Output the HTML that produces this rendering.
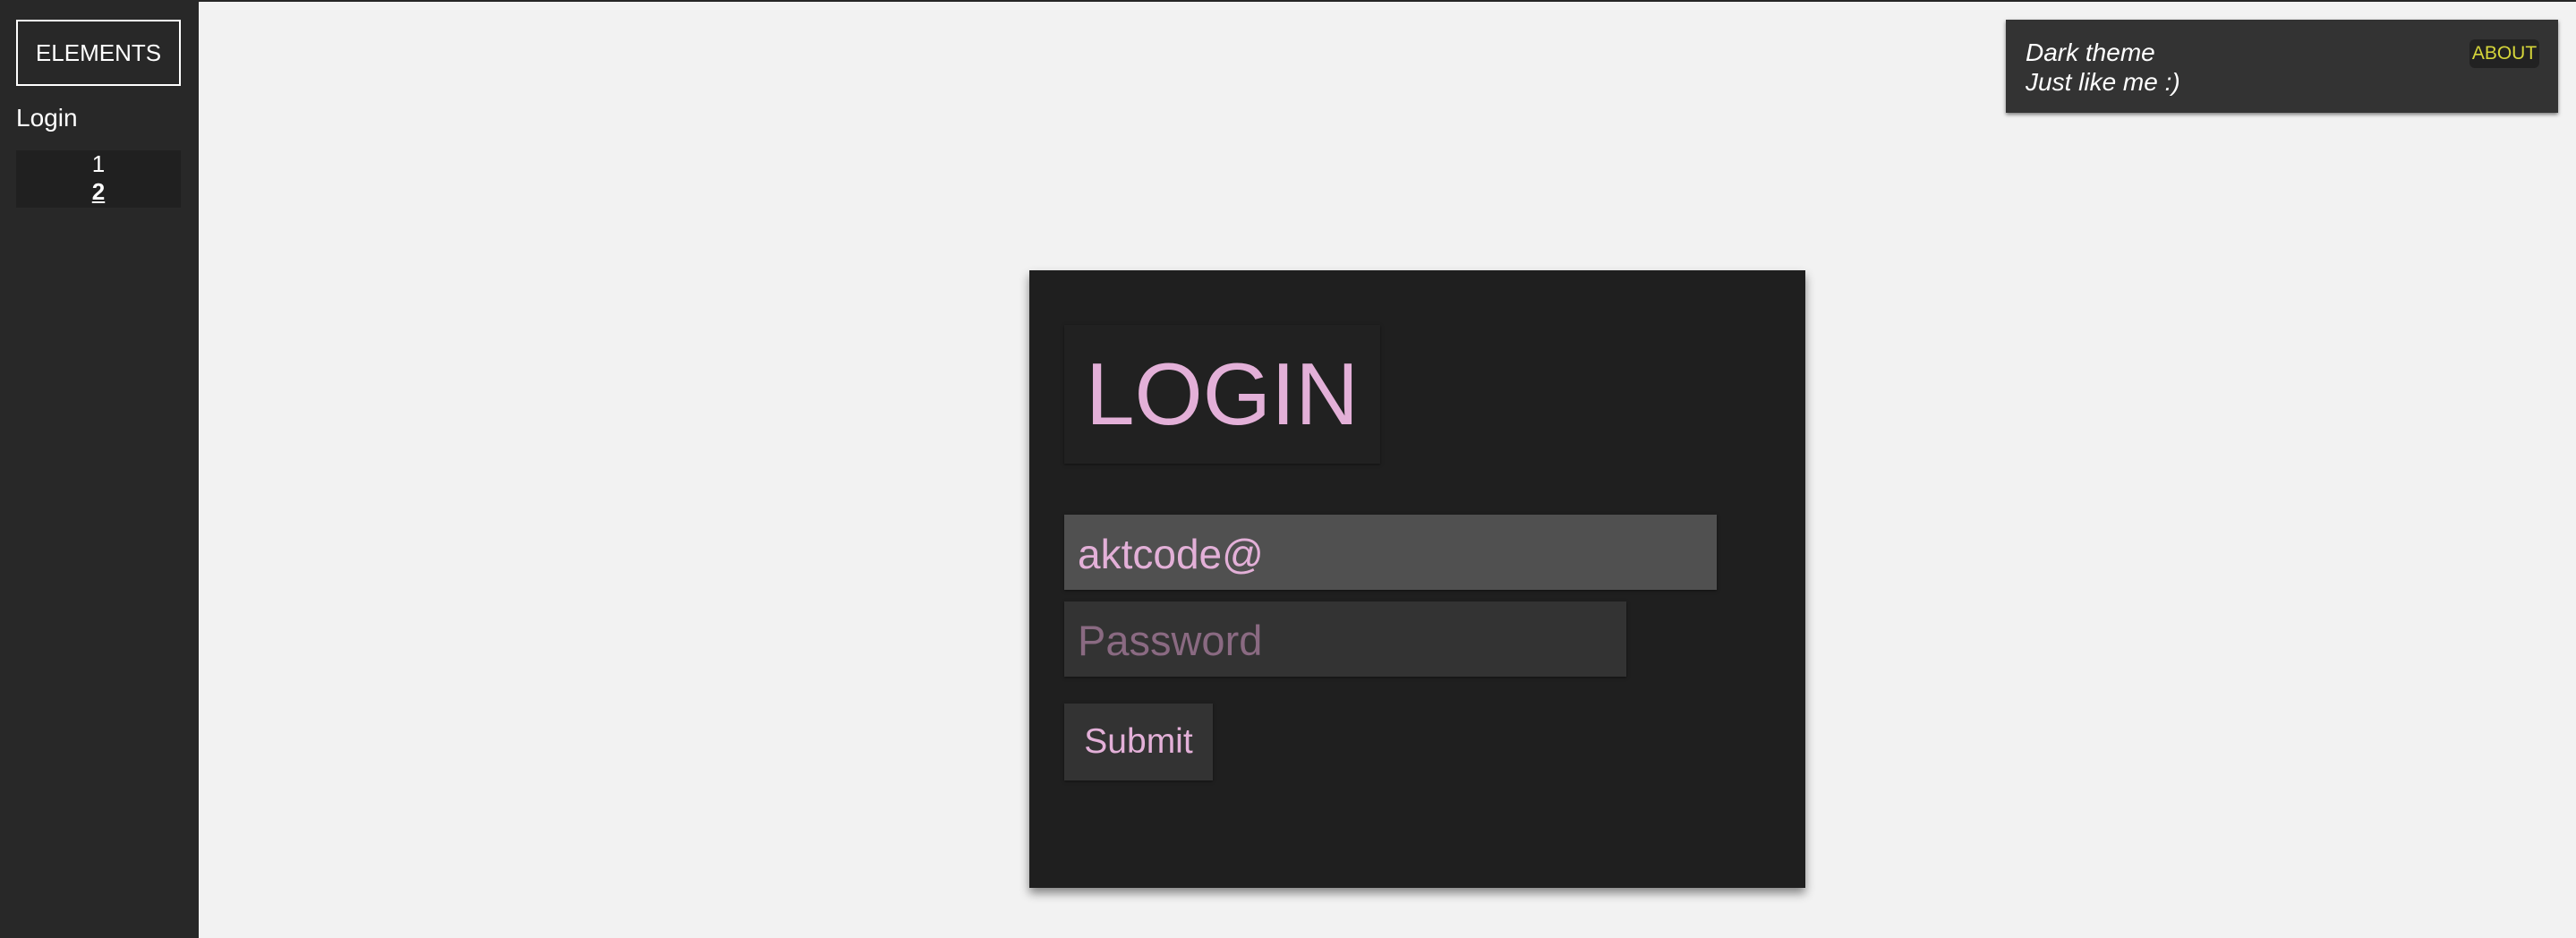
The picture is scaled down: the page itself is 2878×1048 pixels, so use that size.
<!DOCTYPE html>
<html><head><meta charset="utf-8"><style>
html,body{margin:0;padding:0;}
body{width:2878px;height:1048px;background:#f2f2f2;position:relative;overflow:hidden;font-family:"Liberation Sans",Arial,sans-serif;}
.topline{position:absolute;left:0;top:0;width:2878px;height:2px;background:#262626;}
.side{position:absolute;left:0;top:0;width:222px;height:1048px;background:#282828;}
.el{position:absolute;left:18px;top:22px;width:180px;height:70px;border:2px solid #fff;color:#fff;font-size:26px;text-align:center;line-height:70px;}
.lg{position:absolute;left:18px;top:116px;color:#fff;font-size:28px;}
.pg{position:absolute;left:18px;top:168px;width:184px;height:64px;background:#202020;color:#fff;text-align:center;font-size:26px;line-height:31px;}
.pg b{text-decoration:underline;}
.card{position:absolute;left:2241px;top:22px;width:617px;height:104px;background:#333;box-shadow:0 2px 4px rgba(0,0,0,.5);color:#fff;font-style:italic;font-size:28px;}
.card .t{position:absolute;left:22px;top:20px;line-height:33px;}
.about{position:absolute;left:518px;top:22px;width:78px;height:32px;background:#222;border-radius:6px;color:#d6d63a;font-style:normal;font-size:21px;line-height:32px;text-align:center;}
.login{position:absolute;left:1150px;top:302px;width:867px;height:690px;background:#1f1f1f;box-shadow:0 6px 10px rgba(0,0,0,.45);}
.ttl{position:absolute;left:39px;top:61px;width:353px;height:155px;background:#212121;box-shadow:0 1px 3px rgba(0,0,0,.5);color:#e3b0d8;font-size:98px;line-height:155px;text-align:center;}
.in1{position:absolute;left:39px;top:273px;width:729px;height:84px;background:#505050;box-shadow:0 1px 3px rgba(0,0,0,.5);color:#e3b0d8;font-size:46px;line-height:88px;padding-left:15px;box-sizing:border-box;}
.in2{position:absolute;left:39px;top:370px;width:628px;height:84px;background:#333;box-shadow:0 1px 3px rgba(0,0,0,.5);color:#8a6a82;font-size:47px;line-height:88px;padding-left:15px;box-sizing:border-box;}
.sub{position:absolute;left:39px;top:484px;width:166px;height:86px;background:#333;box-shadow:0 1px 3px rgba(0,0,0,.5);color:#e3b0d8;font-size:39px;line-height:86px;text-align:center;}
</style></head><body>
<div class="topline"></div>
<div class="side">
<div class="el">ELEMENTS</div>
<div class="lg">Login</div>
<div class="pg">1<br><b>2</b></div>
</div>
<div class="card"><div class="t">Dark theme<br>Just like me :)</div><div class="about">ABOUT</div></div>
<div class="login">
<div class="ttl">LOGIN</div>
<div class="in1">aktcode@</div>
<div class="in2">Password</div>
<div class="sub">Submit</div>
</div>
</body></html>
